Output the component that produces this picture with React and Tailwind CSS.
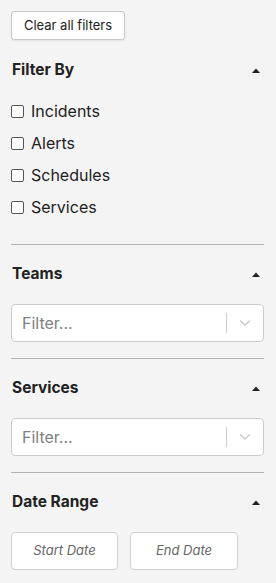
import React from "react";

function Caret() {
  return (
    <svg width="8" height="5" viewBox="0 0 8 5" className="block">
      <path d="M0 5 L4 0.5 L8 5 Z" fill="#222" />
    </svg>
  );
}

function Heading({ children }) {
  return (
    <div className="flex h-5 items-center justify-between pl-px">
      <span className="text-[15.5px] font-bold text-[#222]">{children}</span>
      <span className="mr-[4px]"><Caret /></span>
    </div>
  );
}

function Check({ label }) {
  return (
    <label className="flex h-8 items-center">
      <span className="h-[13px] w-[13px] rounded-[2px] border border-[#555] bg-white" />
      <span className="ml-[7px] text-[16px] text-[#222]">{label}</span>
    </label>
  );
}

function Select() {
  return (
    <div className="flex h-[38px] items-center rounded-[4px] border border-[#cccccc] bg-white">
      <span className="flex-1 pl-[10px] text-[16px] text-[#808080]">Filter...</span>
      <span className="h-[20px] w-px bg-[#cccccc]" />
      <span className="flex w-[36px] items-center justify-center">
        <svg width="12" height="8" viewBox="0 0 12 8">
          <path d="M1 1.5 L6 6 L11 1.5" fill="none" stroke="#cccccc" strokeWidth="1.6" />
        </svg>
      </span>
    </div>
  );
}

export default function App() {
  return (
    <div
      className="min-h-[583px] w-[276px] bg-[#f4f4f4] pl-[11px] pr-[12px] pt-[11px]"
      style={{ fontFamily: "Inter, 'Noto Sans', sans-serif" }}
    >
      <button className="flex h-[29px] w-[114px] items-center justify-center rounded-[3px] border border-[#c8c8c8] bg-white text-[13px] text-[#222] shadow-[0_1px_2px_rgba(0,0,0,0.08)]">
        Clear all filters
      </button>

      <div className="mt-5">
        <Heading>Filter By</Heading>
      </div>
      <div className="mt-[15px]">
        <Check label="Incidents" />
        <Check label="Alerts" />
        <Check label="Schedules" />
        <Check label="Services" />
      </div>
      <div className="mt-[21px] h-px bg-[#b4b4b4]" />

      <div className="mt-[19px]">
        <Heading>Teams</Heading>
      </div>
      <div className="mt-5">
        <Select />
      </div>
      <div className="mt-4 h-px bg-[#b4b4b4]" />

      <div className="mt-[19px]">
        <Heading>Services</Heading>
      </div>
      <div className="mt-5">
        <Select />
      </div>
      <div className="mt-4 h-px bg-[#b4b4b4]" />

      <div className="mt-[19px]">
        <Heading>Date Range</Heading>
      </div>
      <div className="mt-5 flex gap-3">
        <div className="flex h-[38px] w-[107px] items-center justify-center rounded-[4px] border border-[#d0d0d0] bg-white text-[13px] italic text-[#666]">
          Start Date
        </div>
        <div className="flex h-[38px] w-[108px] items-center justify-center rounded-[4px] border border-[#d0d0d0] bg-white text-[13px] italic text-[#666]">
          End Date
        </div>
      </div>
    </div>
  );
}
